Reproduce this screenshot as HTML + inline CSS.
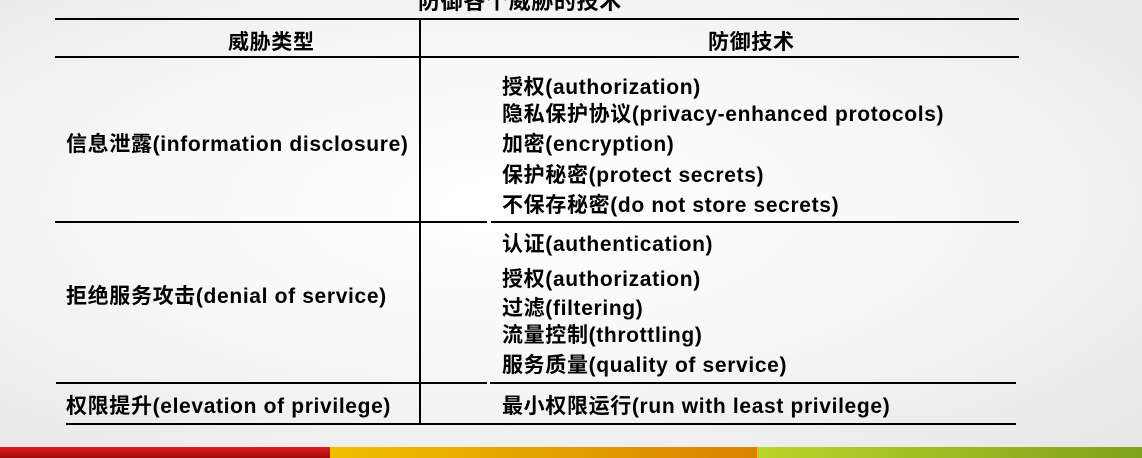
<!DOCTYPE html>
<html><head><meta charset="utf-8"><style>
body{margin:0;width:1142px;height:458px;overflow:hidden;position:relative;
background:radial-gradient(ellipse at 45% 45%,#ffffff 0%,#f7f7f7 45%,#e6e6e6 100%);
font-family:"Liberation Sans","Noto Sans CJK SC",sans-serif;font-weight:bold;color:#000}
.t{position:absolute;font-size:21px;line-height:24px;white-space:nowrap;letter-spacing:0.65px}
.h{position:absolute;background:#000;height:2px}
.v{position:absolute;background:#000;width:2px}
.bar{position:absolute;top:447px;height:11px}
</style></head><body>
<div class="t" style="left:418px;top:-10px;font-size:22px">防御各个威胁的技术</div>
<div class="h" style="left:55px;top:18px;width:964px"></div>
<div class="h" style="left:55px;top:56px;width:964px"></div>
<div class="v" style="left:419px;top:18px;height:407px"></div>
<div class="h" style="left:55px;top:221px;width:432px"></div>
<div class="h" style="left:491px;top:221px;width:528px"></div>
<div class="h" style="left:56px;top:382px;width:431px"></div>
<div class="h" style="left:490px;top:382px;width:526px"></div>
<div class="h" style="left:66px;top:423px;width:950px"></div>

<div class="t" style="left:228px;top:31px">威胁类型</div>
<div class="t" style="left:708px;top:31px">防御技术</div>

<div class="t" style="left:66px;top:133px">信息泄露(information disclosure)</div>
<div class="t" style="left:66px;top:285px">拒绝服务攻击(denial of service)</div>
<div class="t" style="left:66px;top:395px">权限提升(elevation of privilege)</div>

<div class="t" style="left:502px;top:76px">授权(authorization)</div>
<div class="t" style="left:502px;top:103px">隐私保护协议(privacy-enhanced protocols)</div>
<div class="t" style="left:502px;top:133px">加密(encryption)</div>
<div class="t" style="left:502px;top:164px">保护秘密(protect secrets)</div>
<div class="t" style="left:502px;top:194px">不保存秘密(do not store secrets)</div>
<div class="t" style="left:502px;top:233px">认证(authentication)</div>
<div class="t" style="left:502px;top:268px">授权(authorization)</div>
<div class="t" style="left:502px;top:297px">过滤(filtering)</div>
<div class="t" style="left:502px;top:324px">流量控制(throttling)</div>
<div class="t" style="left:502px;top:354px">服务质量(quality of service)</div>
<div class="t" style="left:502px;top:395px">最小权限运行(run with least privilege)</div>

<div class="bar" style="left:0;width:330px;background:linear-gradient(#d81e1e,#a50a0a)"></div>
<div class="bar" style="left:330px;width:427px;background:linear-gradient(90deg,#f0c000,#d88400)"></div>
<div class="bar" style="left:757px;width:385px;background:linear-gradient(90deg,#bcd42a,#7fa21c)"></div>
</body></html>
